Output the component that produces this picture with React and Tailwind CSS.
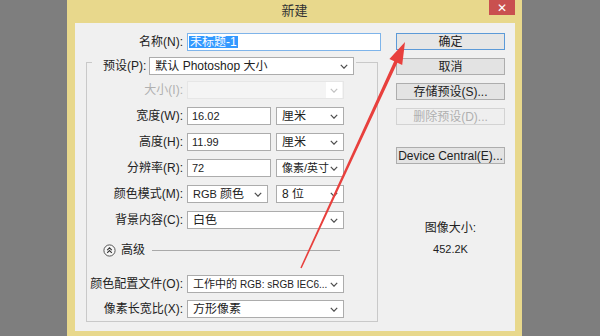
import React from "react";

const font = "font-['Liberation_Sans','Noto_Sans_CJK_SC',sans-serif]";

function Chevron({ light }) {
  return (
    <svg width="8" height="5" viewBox="0 0 8 5" className="shrink-0">
      <path
        d="M0.8 0.8 L4 4.2 L7.2 0.8"
        fill="none"
        stroke={light ? "#c2c2c2" : "#4d4d4d"}
        strokeWidth="1.2"
      />
    </svg>
  );
}

function Select({ w, children, disabled }) {
  return (
    <div
      className={`flex h-[18px] items-center pl-[5px] pr-[5px] ${w} ${
        disabled ? "border border-[#e6e6e6] bg-[#f4f4f4]" : "border border-[#acacac] bg-white"
      }`}
    >
      <div className="flex-1 overflow-hidden whitespace-nowrap text-[12px] leading-none text-[#222]">{children}</div>
      {disabled ? (
        <div className="-mr-[4px] flex h-[16px] w-[16px] items-center justify-center bg-white">
          <Chevron light />
        </div>
      ) : (
        <Chevron />
      )}
    </div>
  );
}

function Field({ w, children }) {
  return (
    <div className={`flex h-[18px] items-center border border-[#acacac] bg-white pl-[4px] text-[11px] leading-none text-[#222] ${w}`}>
      {children}
    </div>
  );
}

function Row({ label, disabled, children, className = "" }) {
  return (
    <div className={`flex h-[18px] items-center ${className}`}>
      <div
        className={`w-[96px] text-right text-[12px] leading-none ${
          disabled ? "text-[#b0b0b0]" : "text-[#222]"
        }`}
      >
        {label}
      </div>
      <div className="ml-[4px] flex gap-[5px]">{children}</div>
    </div>
  );
}

function Btn({ children, primary, disabled, className = "" }) {
  return (
    <div
      className={`flex h-[17px] items-center justify-center text-[12px] leading-none ${
        primary
          ? "border border-[#5c9ad8] bg-[#e6e6e6] text-[#222]"
          : disabled
          ? "border border-[#d3d3d3] bg-[#efefef] text-[#b0b0b0]"
          : "border border-[#adadad] bg-[#e3e3e3] text-[#222]"
      } ${className}`}
    >
      {children}
    </div>
  );
}

function AdvancedIcon() {
  return (
    <svg width="13" height="13" viewBox="0 0 13 13">
      <circle cx="6.5" cy="6.5" r="5.6" fill="#f7f7f7" stroke="#555" strokeWidth="1" />
      <path d="M4.2 6.2 L6.5 3.9 L8.8 6.2 M4.2 8.8 L6.5 6.5 L8.8 8.8" fill="none" stroke="#333" strokeWidth="1.1" />
    </svg>
  );
}

export default function App() {
  return (
    <div className={`relative h-[336px] w-[600px] overflow-hidden bg-[#7e7e7e] ${font}`}>
      <div className="ml-[67px] flex h-[336px] w-[455px] flex-col bg-[#e8d88c]">
        {/* title bar */}
        <div className="flex h-[23px] items-start">
          <div className="w-[33px]" />
          <div className="flex-1 pt-[3px] text-center text-[13px] leading-[16px] text-[#333]">新建</div>
          <div className="flex h-[15px] w-[26px] items-center justify-center bg-[#c9504f] text-[12px] leading-none text-white">
            ✕
          </div>
          <div className="w-[7px]" />
        </div>

        {/* content */}
        <div className="ml-[8px] flex h-[308px] w-[440px] bg-[#f0f0f0]">
          {/* left column */}
          <div className="w-[321px]">
            <div className="mt-[10px] flex h-[18px] items-center">
              <div className="w-[108px] text-right text-[12px] leading-none text-[#222]">名称(N):</div>
              <div className="ml-[4px] flex h-[18px] w-[194px] items-center border border-[#7eb4ea] bg-white pl-[1px]">
                <span className="bg-[#3399ff] px-[1px] text-[12px] leading-[12px] text-white">未标题-1</span>
              </div>
            </div>

            {/* preset group */}
            <div className="ml-[11px] mt-[11px] w-[292px] border border-[#c9c9c9] pb-[3px]">
              <div className="-mt-[6px] ml-[5px] flex h-[18px] w-fit items-center bg-[#f0f0f0] pl-[11px] pr-[2px]">
                <div className="text-[12px] leading-none text-[#222]">预设(P):</div>
                <Select w="ml-[3px] w-[205px]">默认 Photoshop 大小</Select>
              </div>

              <Row label="大小(I):" disabled className="mt-[6px]">
                <Select w="w-[157px]" disabled />
              </Row>
              <Row label="宽度(W):" className="mt-[8px]">
                <Field w="w-[84px]">16.02</Field>
                <Select w="w-[68px]">厘米</Select>
              </Row>
              <Row label="高度(H):" className="mt-[8px]">
                <Field w="w-[84px]">11.99</Field>
                <Select w="w-[68px]">厘米</Select>
              </Row>
              <Row label="分辨率(R):" className="mt-[8px]">
                <Field w="w-[84px]">72</Field>
                <Select w="w-[68px]">
                  <span className="text-[11px]">像素/英寸</span>
                </Select>
              </Row>
              <Row label="颜色模式(M):" className="mt-[8px]">
                <Select w="w-[81px] !mr-[3px]">
                  <span className="text-[11px]">RGB </span>颜色
                </Select>
                <Select w="w-[68px]">8 位</Select>
              </Row>
              <Row label="背景内容(C):" className="mt-[8px]">
                <Select w="w-[157px]">白色</Select>
              </Row>

              <div className="mt-[11px] flex h-[20px] items-center pl-[16px]">
                <AdvancedIcon />
                <div className="ml-[5px] text-[12px] leading-none text-[#222]">高级</div>
                <div className="ml-[7px] h-px w-[188px] bg-[#a9a9a9]" />
              </div>

              <Row label="颜色配置文件(O):" className="mt-[15px]">
                <Select w="w-[157px]">
                  <span className="text-[11px]">
                    工作中的 <span className="text-[10px]">RGB: sRGB IEC6...</span>
                  </span>
                </Select>
              </Row>
              <Row label="像素长宽比(X):" className="mt-[7px]">
                <Select w="w-[157px]">方形像素</Select>
              </Row>
            </div>
          </div>

          {/* right column */}
          <div className="flex w-[109px] flex-col pt-[10px]">
            <Btn primary>确定</Btn>
            <Btn className="mt-[8px]">取消</Btn>
            <Btn className="mt-[8px]">存储预设(S)...</Btn>
            <Btn disabled className="mt-[8px]">删除预设(D)...</Btn>
            <Btn className="mt-[22px] text-[11px]">Device Central(E)...</Btn>
            <div className="mt-[57px] text-center text-[12px] leading-[14px] text-[#222]">图像大小:</div>
            <div className="mt-[7px] text-center text-[11px] leading-[14px] text-[#222]">452.2K</div>
          </div>
        </div>
        <div className="h-[5px]" />
      </div>

      {/* red annotation arrow */}
      <svg className="pointer-events-none absolute left-0 top-0" width="600" height="336">
        <polygon
          points="405,42 402.2,64.9 397.4,62.8 301.7,268.3 300.3,267.7 394.2,61.3 389.4,59.1"
          fill="#e8403d"
        />
      </svg>
    </div>
  );
}
